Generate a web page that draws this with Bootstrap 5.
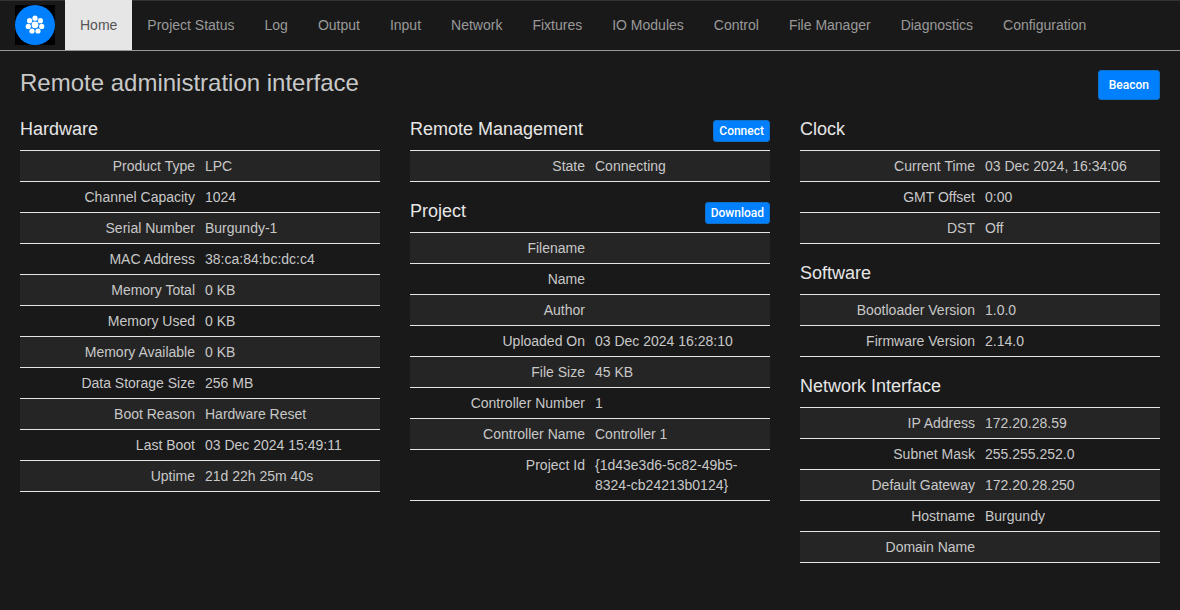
<!DOCTYPE html>
<html lang="en">
<head>
<meta charset="utf-8">
<meta name="viewport" content="width=device-width, initial-scale=1">
<title>Remote administration interface</title>
<link href="https://cdn.jsdelivr.net/npm/bootstrap@5.3.0/dist/css/bootstrap.min.css" rel="stylesheet">
<style>
body { background: #191919; color: #c8c8c8; font: 14px/20px "Liberation Sans", Arial, sans-serif; }
.topbar { border-top: 1px solid #333; border-bottom: 1px solid #999; --bs-navbar-padding-y: 0; }
.topbar .brand-link { padding: 4px 10px 5px 15px; }
.topbar .navbar-nav .nav-link { padding: 14px 15px 15px; color: #999; font-size: 14px; line-height: 20px; }
.topbar .navbar-nav .nav-link:hover { color: #e6e6e6; }
.topbar .navbar-nav .nav-link.active { background: #e6e6e6; color: #555; margin-top: -1px; padding-top: 15px; }
.page { padding: 19px 20px 20px; }
.page-title { font-size: 24px; line-height: 26px; font-weight: 400; }
.page-head { min-height: 50px; }
.columns { --bs-gutter-x: 30px; }
.panel-head { height: 20px; margin-bottom: 10px; }
.panel-title { font-size: 18px; line-height: 18px; font-weight: 400; color: #e6e6e6; }
.facts { table-layout: fixed; width: 100%; margin-bottom: 20px; border-collapse: separate; border-spacing: 0; border-top: 1px solid #e6e6e6; }
.facts th, .facts td { width: 50%; padding: 5px; font-weight: 400; vertical-align: top; border-bottom: 1px solid #e6e6e6; }
.facts th { text-align: right; }
.facts tr:nth-child(odd) { background: #252525; }
.btn-action { --bs-btn-bg: #007fff; --bs-btn-color: #fff; --bs-btn-border-color: #0f6fc6; --bs-btn-hover-bg: #0066cc; --bs-btn-hover-color: #fff; --bs-btn-border-radius: 3px; --bs-btn-padding-x: 10px; --bs-btn-padding-y: 5px; --bs-btn-font-size: 12px; --bs-btn-line-height: 18px; --bs-btn-font-family: Roboto, sans-serif; --bs-btn-font-weight: 500; }
.btn-tiny { --bs-btn-padding-x: 5px; --bs-btn-padding-y: 1px; }
</style>
</head>
<body>
<nav class="navbar navbar-expand topbar" aria-label="Main">
  <a class="brand-link" href="#" aria-label="Start">
    <svg class="d-block" width="40" height="40" viewBox="0 0 40 40" aria-hidden="true">
      <rect width="40" height="40" fill="#000"/>
      <circle cx="20" cy="20" r="20" fill="#007fff"/>
      <g fill="#fff">
        <circle cx="20" cy="19.8" r="3.4"/>
        <circle cx="20" cy="13.2" r="2.6"/>
        <circle cx="25.4" cy="15.7" r="2.6"/>
        <circle cx="26.7" cy="21.4" r="2.6"/>
        <circle cx="23" cy="26" r="2.6"/>
        <circle cx="17" cy="26" r="2.6"/>
        <circle cx="13.3" cy="21.4" r="2.6"/>
        <circle cx="14.6" cy="15.7" r="2.6"/>
      </g>
    </svg>
  </a>
  <ul class="navbar-nav">
    <li class="nav-item"><a class="nav-link active" aria-current="page" href="#">Home</a></li>
    <li class="nav-item"><a class="nav-link" href="#">Project Status</a></li>
    <li class="nav-item"><a class="nav-link" href="#">Log</a></li>
    <li class="nav-item"><a class="nav-link" href="#">Output</a></li>
    <li class="nav-item"><a class="nav-link" href="#">Input</a></li>
    <li class="nav-item"><a class="nav-link" href="#">Network</a></li>
    <li class="nav-item"><a class="nav-link" href="#">Fixtures</a></li>
    <li class="nav-item"><a class="nav-link" href="#">IO Modules</a></li>
    <li class="nav-item"><a class="nav-link" href="#">Control</a></li>
    <li class="nav-item"><a class="nav-link" href="#">File Manager</a></li>
    <li class="nav-item"><a class="nav-link" href="#">Diagnostics</a></li>
    <li class="nav-item"><a class="nav-link" href="#">Configuration</a></li>
  </ul>
</nav>
<main class="container-fluid page">
  <div class="page-head d-flex justify-content-between align-items-start">
    <h1 class="page-title mb-0">Remote administration interface</h1>
    <button type="button" class="btn btn-action">Beacon</button>
  </div>
  <div class="row columns">
    <div class="col-4">
      <section>
        <div class="panel-head"><h2 class="panel-title mb-0">Hardware</h2></div>
        <table class="facts">
          <tbody>
            <tr><th scope="row">Product Type</th><td>LPC</td></tr>
            <tr><th scope="row">Channel Capacity</th><td>1024</td></tr>
            <tr><th scope="row">Serial Number</th><td>Burgundy-1</td></tr>
            <tr><th scope="row">MAC Address</th><td>38:ca:84:bc:dc:c4</td></tr>
            <tr><th scope="row">Memory Total</th><td>0 KB</td></tr>
            <tr><th scope="row">Memory Used</th><td>0 KB</td></tr>
            <tr><th scope="row">Memory Available</th><td>0 KB</td></tr>
            <tr><th scope="row">Data Storage Size</th><td>256 MB</td></tr>
            <tr><th scope="row">Boot Reason</th><td>Hardware Reset</td></tr>
            <tr><th scope="row">Last Boot</th><td>03 Dec 2024 15:49:11</td></tr>
            <tr><th scope="row">Uptime</th><td>21d 22h 25m 40s</td></tr>
          </tbody>
        </table>
      </section>
    </div>
    <div class="col-4">
      <section>
        <div class="panel-head d-flex justify-content-between align-items-start">
          <h2 class="panel-title mb-0">Remote Management</h2>
          <button type="button" class="btn btn-action btn-tiny">Connect</button>
        </div>
        <table class="facts">
          <tbody>
            <tr><th scope="row">State</th><td>Connecting</td></tr>
          </tbody>
        </table>
      </section>
      <section>
        <div class="panel-head d-flex justify-content-between align-items-start">
          <h2 class="panel-title mb-0">Project</h2>
          <button type="button" class="btn btn-action btn-tiny">Download</button>
        </div>
        <table class="facts">
          <tbody>
            <tr><th scope="row">Filename</th><td></td></tr>
            <tr><th scope="row">Name</th><td></td></tr>
            <tr><th scope="row">Author</th><td></td></tr>
            <tr><th scope="row">Uploaded On</th><td>03 Dec 2024 16:28:10</td></tr>
            <tr><th scope="row">File Size</th><td>45 KB</td></tr>
            <tr><th scope="row">Controller Number</th><td>1</td></tr>
            <tr><th scope="row">Controller Name</th><td>Controller 1</td></tr>
            <tr><th scope="row">Project Id</th><td>{1d43e3d6-5c82-49b5-8324-cb24213b0124}</td></tr>
          </tbody>
        </table>
      </section>
    </div>
    <div class="col-4">
      <section>
        <div class="panel-head"><h2 class="panel-title mb-0">Clock</h2></div>
        <table class="facts">
          <tbody>
            <tr><th scope="row">Current Time</th><td>03 Dec 2024, 16:34:06</td></tr>
            <tr><th scope="row">GMT Offset</th><td>0:00</td></tr>
            <tr><th scope="row">DST</th><td>Off</td></tr>
          </tbody>
        </table>
      </section>
      <section>
        <div class="panel-head"><h2 class="panel-title mb-0">Software</h2></div>
        <table class="facts">
          <tbody>
            <tr><th scope="row">Bootloader Version</th><td>1.0.0</td></tr>
            <tr><th scope="row">Firmware Version</th><td>2.14.0</td></tr>
          </tbody>
        </table>
      </section>
      <section>
        <div class="panel-head"><h2 class="panel-title mb-0">Network Interface</h2></div>
        <table class="facts mb-0">
          <tbody>
            <tr><th scope="row">IP Address</th><td>172.20.28.59</td></tr>
            <tr><th scope="row">Subnet Mask</th><td>255.255.252.0</td></tr>
            <tr><th scope="row">Default Gateway</th><td>172.20.28.250</td></tr>
            <tr><th scope="row">Hostname</th><td>Burgundy</td></tr>
            <tr><th scope="row">Domain Name</th><td></td></tr>
          </tbody>
        </table>
      </section>
    </div>
  </div>
</main>
<script src="https://cdn.jsdelivr.net/npm/bootstrap@5.3.0/dist/js/bootstrap.bundle.min.js"></script>
</body>
</html>
